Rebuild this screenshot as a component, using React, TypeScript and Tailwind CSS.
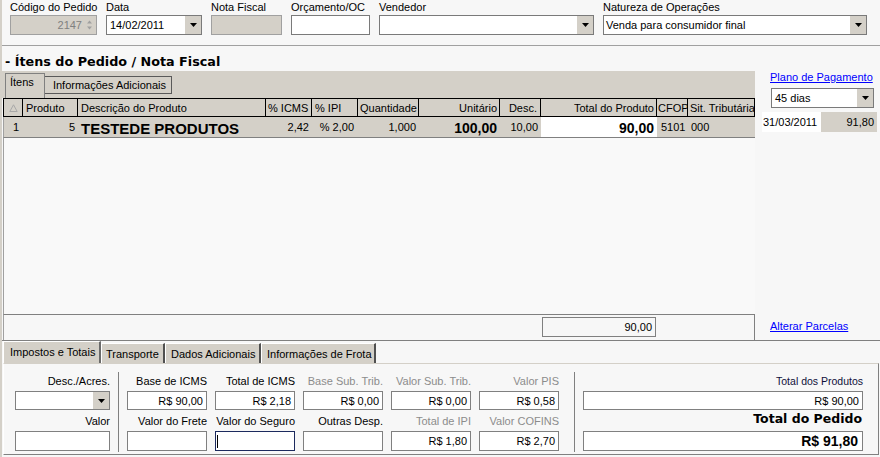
import React from "react";

function Tri({ color = "#000" }: { color?: string }) {
  return (
    <svg width="7" height="4" viewBox="0 0 7 4" className="block">
      <path d="M0 0H7L3.5 4Z" fill={color} />
    </svg>
  );
}

function DropBtn() {
  return (
    <div className="w-[16px] self-stretch bg-[#d4d0c8] flex items-center justify-center shrink-0">
      <Tri />
    </div>
  );
}

function Lbl({ children, cls = "" }: { children: React.ReactNode; cls?: string }) {
  return <div className={"h-[14px] leading-[14px] text-[11px] whitespace-nowrap " + cls}>{children}</div>;
}

function BoxIn({ v = "", cls = "" }: { v?: string; cls?: string }) {
  return (
    <div className={"border border-[#808080] bg-white flex items-center justify-end pr-[3px] text-[11px] leading-[14px] " + cls}>
      {v}
    </div>
  );
}

function TaxCol({ l1, v1, l2, v2, d1, d2, focus }: { l1: string; v1: string; l2: string; v2: string; d1?: boolean; d2?: boolean; focus?: boolean }) {
  return (
    <div className="w-[80px] flex flex-col">
      <Lbl cls={"text-right " + (d1 ? "text-[#8c8c8c]" : "text-black")}>{l1}</Lbl>
      <BoxIn v={v1} cls="mt-[3px] h-[19px]" />
      <Lbl cls={"mt-[4px] text-right " + (d2 ? "text-[#8c8c8c]" : "text-black")}>{l2}</Lbl>
      {focus ? (
        <div className="mt-[3px] h-[20px] border border-[#1c2a5e] bg-white flex items-center pl-[1px]">
          <div className="w-[1px] h-[13px] bg-black" />
        </div>
      ) : (
        <BoxIn v={v2} cls="mt-[3px] h-[20px]" />
      )}
    </div>
  );
}

export default function App() {
  return (
    <div className="w-[880px] h-[457px] overflow-hidden bg-[#f7f7f7] border-l-2 border-[#d4d0c8] font-['Liberation_Sans',Arial,sans-serif] text-black flex flex-col">
      {/* Top fields */}
      <div className="flex h-[46px] shrink-0 border-b border-[#a0a0a0] pl-[8px] gap-[9px]">
        <div className="w-[87px] flex flex-col">
          <Lbl>Código do Pedido</Lbl>
          <div className="mt-[1px] h-[20px] border border-[#a0a0a0] bg-[#d4d0c8] flex items-center justify-end text-[11px] leading-[14px] text-[#808080]">
            <span className="pr-[3px]">2147</span>
            <svg width="9" height="14" viewBox="0 0 9 14" className="mr-[2px]">
              <path d="M4.5 2.5L7 5.5H2Z" fill="#a0a0a0" />
              <path d="M2 8.5H7L4.5 11.5Z" fill="#a0a0a0" />
            </svg>
          </div>
        </div>
        <div className="w-[96px] flex flex-col">
          <Lbl>Data</Lbl>
          <div className="mt-[1px] h-[20px] border border-[#7a7a7a] bg-white flex items-stretch text-[11px] leading-[14px]">
            <div className="flex-1 pl-[3px] flex items-center">14/02/2011</div>
            <DropBtn />
          </div>
        </div>
        <div className="w-[71px] flex flex-col">
          <Lbl>Nota Fiscal</Lbl>
          <div className="mt-[1px] h-[20px] border border-[#a0a0a0] bg-[#d4d0c8]" />
        </div>
        <div className="w-[79px] flex flex-col">
          <Lbl>Orçamento/OC</Lbl>
          <div className="mt-[1px] h-[20px] border border-[#7a7a7a] bg-white" />
        </div>
        <div className="w-[215px] flex flex-col">
          <Lbl>Vendedor</Lbl>
          <div className="mt-[1px] h-[20px] border border-[#7a7a7a] bg-white flex items-stretch justify-end">
            <DropBtn />
          </div>
        </div>
        <div className="w-[264px] flex flex-col">
          <Lbl>Natureza de Operações</Lbl>
          <div className="mt-[1px] h-[20px] border border-[#7a7a7a] bg-white flex items-stretch text-[11px] leading-[14px]">
            <div className="flex-1 pl-[2px] flex items-center">Venda para consumidor final</div>
            <DropBtn />
          </div>
        </div>
      </div>

      {/* Middle: grid + payment */}
      <div className="flex h-[295px] shrink-0 border-b border-[#808080]">
        <div className="w-[753px] flex flex-col">
          <div className="h-[25px] shrink-0 pt-[8px] pl-[3px] text-[12.75px] font-bold leading-[16px] whitespace-nowrap font-['DejaVu_Sans',sans-serif]">
            - Ítens do Pedido / Nota Fiscal
          </div>
          <div className="h-[27px] shrink-0 bg-[#d4d0c8] flex items-start pl-[3px] text-[11px] leading-[14px]">
            <div className="mt-[2px] h-[25px] w-[40px] border-t border-l border-r border-[#808080] pt-[1px] pl-[4px]">Ítens</div>
            <div className="mt-[5px] h-[18px] w-[127px] border border-[#5a5a5a] border-l-0 flex items-center justify-center whitespace-nowrap pl-[3px]">
              Informações Adicionais
            </div>
          </div>
          <div className="flex-1 flex flex-col ml-[1px]">
            {/* Header */}
            <div className="flex h-[19px] shrink-0 border-t border-b border-black bg-[#d4d0c8] text-[11px] leading-[14px] whitespace-nowrap">
              <div className="w-[20px] border-l border-r border-black flex items-center justify-center">
                <svg width="9" height="8" viewBox="0 0 9 8">
                  <path d="M4.5 0.8L8.2 7.5H0.8Z" stroke="#a8a8a8" fill="none" strokeWidth="1" />
                </svg>
              </div>
              <div className="w-[55px] border-r border-black flex items-center pl-[3px]">Produto</div>
              <div className="w-[188px] border-r border-black flex items-center pl-[3px]">Descrição do Produto</div>
              <div className="w-[46px] border-r border-black flex items-center pl-[2px]">% ICMS</div>
              <div className="w-[46px] border-r border-black flex items-center pl-[3px]">% IPI</div>
              <div className="w-[61px] border-r border-black flex items-center pl-[2px]">Quantidade</div>
              <div className="w-[81px] border-r border-black flex items-center justify-end pr-[2px]">Unitário</div>
              <div className="w-[41px] border-r border-black flex items-center justify-end pr-[3px]">Desc.</div>
              <div className="w-[116px] border-r border-black flex items-center justify-end pr-[2px]">Total do Produto</div>
              <div className="w-[31px] border-r border-black flex items-center pl-[1px] overflow-hidden">CFOP</div>
              <div className="w-[67px] border-r border-black flex items-center pl-[2px] overflow-hidden">Sit. Tributária</div>
            </div>
            {/* Row */}
            <div className="flex h-[21px] shrink-0 border-b border-[#808080] border-l border-l-[#a0a0a0] bg-[#d4d0c8] text-[11px] leading-[14px] whitespace-nowrap">
              <div className="w-[19px] pt-[3px] text-right pr-[4px]">1</div>
              <div className="w-[55px] pt-[3px] text-right pr-[3px]">5</div>
              <div className="w-[188px] pt-[3px] pl-[3px] text-[15px] leading-[17px] font-bold">TESTEDE PRODUTOS</div>
              <div className="w-[46px] pt-[3px] text-right pr-[3px]">2,42</div>
              <div className="w-[46px] pt-[3px] text-right pr-[4px]">% 2,00</div>
              <div className="w-[61px] pt-[3px] text-right pr-[3px]">1,000</div>
              <div className="w-[81px] pt-[3px] text-right pr-[3px] text-[14px] leading-[16px] font-bold">100,00</div>
              <div className="w-[41px] pt-[3px] text-right pr-[3px]">10,00</div>
              <div className="w-[116px] pt-[3px] text-right pr-[3px] text-[14px] leading-[16px] font-bold bg-white">90,00</div>
              <div className="w-[31px] pt-[3px] pl-[4px]">5101</div>
              <div className="w-[67px] pt-[3px] pl-[3px]">000</div>
            </div>
            <div className="flex-1 border-l border-[#a0a0a0] bg-[#f9f9f9]" />
            <div className="h-[26px] shrink-0 border-t border-l border-r border-[#808080] border-l-[#a0a0a0] flex items-start">
              <div className="ml-[538px] mt-[2px] w-[114px] h-[20px] border border-[#808080] bg-[#f7f7f7] flex items-center justify-end pr-[3px] text-[11px] leading-[14px]">
                90,00
              </div>
            </div>
          </div>
        </div>
        <div className="w-[125px] flex flex-col pl-[7px] pt-[24px] text-[11px] leading-[14px]">
          <div className="ml-[8px] h-[14px] text-[#0000ff] underline whitespace-nowrap">Plano de Pagamento</div>
          <div className="ml-[9px] mt-[4px] w-[103px] h-[20px] border border-[#7a7a7a] bg-white flex items-stretch">
            <div className="flex-1 pl-[3px] flex items-center">45 dias</div>
            <DropBtn />
          </div>
          <div className="mt-[4px] flex h-[20px]">
            <div className="w-[59px] bg-white pl-[1px] flex items-center">31/03/2011</div>
            <div className="w-[56px] bg-[#d4d0c8] pr-[3px] flex items-center justify-end">91,80</div>
          </div>
          <div className="mt-auto mb-[7px] ml-[8px] h-[14px] text-[#0000ff] underline whitespace-nowrap">Alterar Parcelas</div>
        </div>
      </div>

      {/* Bottom tabs */}
      <div className="flex flex-col ml-[1px]">
        <div className="flex h-[22px] items-start text-[11px] leading-[14px] whitespace-nowrap">
          <div className="w-[98px] h-[22px] bg-[#d4d0c8] border-l border-t border-white border-r-2 border-r-[#6a6a6a] pt-[3px] pl-[6px]">
            Impostos e Totais
          </div>
          <div className="w-[64px] mt-[2px] h-[20px] bg-[#d4d0c8] border-l border-t border-white border-r-2 border-r-[#505050] pt-[3px] pl-[4px]">
            Transporte
          </div>
          <div className="w-[96px] mt-[2px] h-[20px] bg-[#d4d0c8] border-l border-t border-white border-r-2 border-r-[#505050] pt-[3px] pl-[5px]">
            Dados Adicionais
          </div>
          <div className="w-[115px] mt-[2px] h-[20px] bg-[#d4d0c8] border-l border-t border-white border-r-2 border-r-[#505050] pt-[3px] pl-[5px]">
            Informações de Frota
          </div>
        </div>
        <div className="w-[876px] h-[92px] border-t border-t-[#d4d0c8] border-l border-l-white border-r border-r-[#808080] border-b border-b-[#808080] flex items-start pt-[10px] pl-[11px]">
          <div className="w-[95px] flex flex-col">
            <Lbl cls="text-right">Desc./Acres.</Lbl>
            <div className="mt-[3px] h-[19px] border border-[#808080] bg-white flex items-stretch justify-end">
              <DropBtn />
            </div>
            <Lbl cls="mt-[4px] text-right">Valor</Lbl>
            <BoxIn cls="mt-[3px] h-[20px]" />
          </div>
          <div className="ml-[8px] -mt-[2px] w-[1px] h-[80px] bg-[#808080]" />
          <div className="ml-[8px] flex gap-[8px]">
            <TaxCol l1="Base de ICMS" v1="R$ 90,00" l2="Valor do Frete" v2="" />
            <TaxCol l1="Total de ICMS" v1="R$ 2,18" l2="Valor do Seguro" v2="" focus />
            <TaxCol l1="Base Sub. Trib." v1="R$ 0,00" l2="Outras Desp." v2="" d1 />
            <TaxCol l1="Valor Sub. Trib." v1="R$ 0,00" l2="Total de IPI" v2="R$ 1,80" d1 d2 />
            <TaxCol l1="Valor PIS" v1="R$ 0,58" l2="Valor COFINS" v2="R$ 2,70" d1 d2 />
          </div>
          <div className="ml-[15px] -mt-[2px] w-[1px] h-[80px] bg-[#808080]" />
          <div className="ml-[8px] w-[280px] flex flex-col">
            <div className="h-[14px] leading-[14px] text-[10.5px] text-right text-[#10103a] whitespace-nowrap">Total dos Produtos</div>
            <div className="mt-[3px] h-[19px] border border-[#808080] bg-white flex items-center justify-end pr-[3px] text-[11px] leading-[14px]">
              R$ 90,00
            </div>
            <div className="h-[18px] leading-[18px] text-[12.5px] font-bold text-right mb-[3px] pr-[1px] whitespace-nowrap font-['DejaVu_Sans',sans-serif]">Total do Pedido</div>
            <div className="h-[20px] border border-[#808080] bg-white flex items-center justify-end pr-[4px] text-[14px] leading-[16px] font-bold">
              R$ 91,80
            </div>
          </div>
        </div>
      </div>
    </div>
  );
}
